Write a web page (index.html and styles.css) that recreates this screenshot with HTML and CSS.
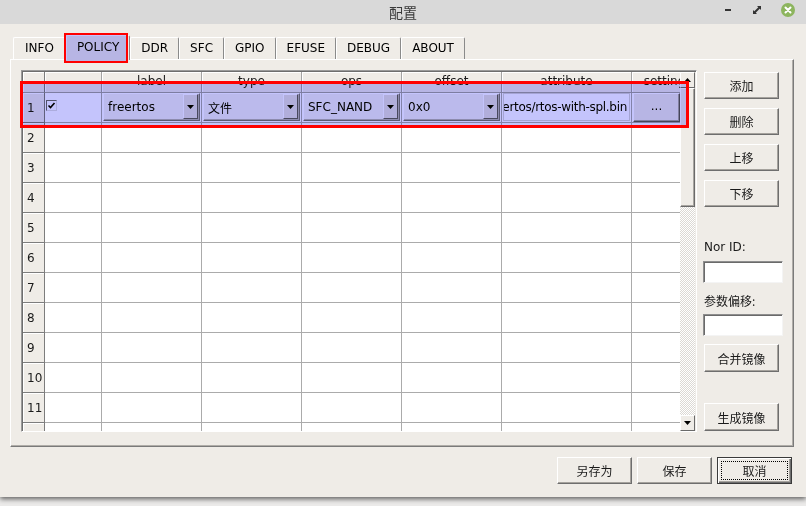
FILE: index.html
```html
<!DOCTYPE html>
<html>
<head>
<meta charset="utf-8">
<title>配置</title>
<link rel="stylesheet" href="styles.css">
</head>
<body>
<div class="window">
  <div class="titlebar">
    <div></div>
    <div class="title">配置</div>
    <div class="wm">
      <span class="wm-min"></span>
      <svg class="wm-max" width="8" height="8" viewBox="0 0 8 8"><polygon points="0,8 0,4 4,8" fill="#333"/><polygon points="8,0 8,4 4,0" fill="#333"/><line x1="1.5" y1="6.5" x2="6.5" y2="1.5" stroke="#333" stroke-width="2"/></svg>
      <svg class="wm-close" width="14" height="14" viewBox="0 0 14 14"><circle cx="7" cy="7" r="7" fill="#8db55e"/><path d="M4.5 4.5 L9.5 9.5 M9.5 4.5 L4.5 9.5" stroke="#fff" stroke-width="2" stroke-linecap="round"/></svg>
    </div>
  </div>
  <div class="main">
    <div class="tabs">
      <div class="tab">INFO</div>
      <div class="tab sel">POLICY</div>
      <div class="tab">DDR</div>
      <div class="tab">SFC</div>
      <div class="tab">GPIO</div>
      <div class="tab">EFUSE</div>
      <div class="tab">DEBUG</div>
      <div class="tab">ABOUT</div>
    </div>
    <div class="pane">
      <div class="table">
        <div class="viewport">
          <div class="grid">
            <div class="hh corner"></div>
            <div class="hh"></div>
            <div class="hh">label</div>
            <div class="hh">type</div>
            <div class="hh">ops</div>
            <div class="hh">offset</div>
            <div class="hh">attribute</div>
            <div class="hh">setting</div>

            <div class="vh">1</div>
            <div class="c cchk"><span class="chk"><svg width="9" height="9" viewBox="0 0 9 9"><path d="M1.5 4.5 L3.5 6.5 L7.5 2" fill="none" stroke="#000" stroke-width="1.6"/></svg></span></div>
            <div class="c ccombo"><div class="combo"><span class="combo-text">freertos</span><span class="combo-btn"><svg width="7" height="4" viewBox="0 0 7 4"><polygon points="0,0 7,0 3.5,4" fill="#000"/></svg></span></div></div>
            <div class="c ccombo"><div class="combo"><span class="combo-text cjk">文件</span><span class="combo-btn"><svg width="7" height="4" viewBox="0 0 7 4"><polygon points="0,0 7,0 3.5,4" fill="#000"/></svg></span></div></div>
            <div class="c ccombo"><div class="combo"><span class="combo-text">SFC_NAND</span><span class="combo-btn"><svg width="7" height="4" viewBox="0 0 7 4"><polygon points="0,0 7,0 3.5,4" fill="#000"/></svg></span></div></div>
            <div class="c ccombo"><div class="combo"><span class="combo-text">0x0</span><span class="combo-btn"><svg width="7" height="4" viewBox="0 0 7 4"><polygon points="0,0 7,0 3.5,4" fill="#000"/></svg></span></div></div>
            <div class="c ccombo"><div class="edit"><span>freertos/rtos-with-spl.bin</span></div></div>
            <div class="c ccombo"><div class="dots">...</div></div>

            <div class="vh">2</div><div class="c"></div><div class="c"></div><div class="c"></div><div class="c"></div><div class="c"></div><div class="c"></div><div class="c"></div>
            <div class="vh">3</div><div class="c"></div><div class="c"></div><div class="c"></div><div class="c"></div><div class="c"></div><div class="c"></div><div class="c"></div>
            <div class="vh">4</div><div class="c"></div><div class="c"></div><div class="c"></div><div class="c"></div><div class="c"></div><div class="c"></div><div class="c"></div>
            <div class="vh">5</div><div class="c"></div><div class="c"></div><div class="c"></div><div class="c"></div><div class="c"></div><div class="c"></div><div class="c"></div>
            <div class="vh">6</div><div class="c"></div><div class="c"></div><div class="c"></div><div class="c"></div><div class="c"></div><div class="c"></div><div class="c"></div>
            <div class="vh">7</div><div class="c"></div><div class="c"></div><div class="c"></div><div class="c"></div><div class="c"></div><div class="c"></div><div class="c"></div>
            <div class="vh">8</div><div class="c"></div><div class="c"></div><div class="c"></div><div class="c"></div><div class="c"></div><div class="c"></div><div class="c"></div>
            <div class="vh">9</div><div class="c"></div><div class="c"></div><div class="c"></div><div class="c"></div><div class="c"></div><div class="c"></div><div class="c"></div>
            <div class="vh">10</div><div class="c"></div><div class="c"></div><div class="c"></div><div class="c"></div><div class="c"></div><div class="c"></div><div class="c"></div>
            <div class="vh">11</div><div class="c"></div><div class="c"></div><div class="c"></div><div class="c"></div><div class="c"></div><div class="c"></div><div class="c"></div>
            <div class="vh">12</div><div class="c"></div><div class="c"></div><div class="c"></div><div class="c"></div><div class="c"></div><div class="c"></div><div class="c"></div>
          </div>
        </div>
        <div class="vscroll">
          <div class="sb-btn"><svg width="7" height="4" viewBox="0 0 7 4"><polygon points="0,4 7,4 3.5,0" fill="#000"/></svg></div>
          <div class="sb-thumb"></div>
          <div class="sb-track"></div>
          <div class="sb-btn"><svg width="7" height="4" viewBox="0 0 7 4"><polygon points="0,0 7,0 3.5,4" fill="#000"/></svg></div>
        </div>
      </div>
      <div class="side">
        <div class="btn side-btn first">添加</div>
        <div class="btn side-btn">删除</div>
        <div class="btn side-btn">上移</div>
        <div class="btn side-btn">下移</div>
        <div class="lbl lbl-nor">Nor ID:</div>
        <div class="field"></div>
        <div class="lbl lbl-off">参数偏移:</div>
        <div class="field"></div>
        <div class="btn side-btn merge">合并镜像</div>
        <div class="btn side-btn gen">生成镜像</div>
      </div>
    </div>
    <div class="footer">
      <div class="btn">另存为</div>
      <div class="btn">保存</div>
      <div class="btn default"><span class="focus">取消</span></div>
    </div>
  </div>
  <div class="tint tint-tab"></div>
  <div class="mark mark-tab"></div>
  <div class="tint tint-row"></div>
  <div class="mark mark-row"></div>
</div>
</body>
</html>
```
FILE: styles.css
```css
* { box-sizing: border-box; }
html, body { margin: 0; padding: 0; }
body {
  width: 806px;
  height: 506px;
  overflow: hidden;
  background: #ecebea;
  font-family: "DejaVu Sans", "Noto Sans CJK SC", sans-serif;
  font-size: 12px;
  color: #000;
}
.window {
  position: relative;
  width: 806px;
  height: 497px;
  background: #efece7;
  box-shadow: 0 2px 5px rgba(0,0,0,0.6);
  display: flex;
  flex-direction: column;
}
.titlebar {
  height: 24px;
  flex: none;
  background: #d9d9d9;
  display: grid;
  grid-template-columns: 1fr auto 1fr;
  align-items: center;
}
.title {
  font-family: "Noto Sans CJK SC", sans-serif;
  font-size: 14px;
  color: #3a3a3a;
}
.wm {
  display: flex;
  justify-content: flex-end;
  align-items: center;
  padding-right: 11px;
  height: 20px;
  margin-top: -4px;
}
.wm-min { width: 6px; height: 2px; background: #333; margin-right: 22px; }
.wm-max { margin-right: 20px; }
.main {
  flex: 1;
  display: flex;
  flex-direction: column;
  padding: 11px 12px 0 10px;
}
.tabs {
  height: 24px;
  display: flex;
  align-items: flex-end;
  padding-left: 3px;
}
.tab {
  height: 22px;
  padding: 0 10px 1px;
  display: flex;
  align-items: center;
  border-left: 1px solid #fff;
  border-top: 1px solid #fff;
  border-right: 1px solid #8a8a8a;
  border-top-left-radius: 2px;
  border-top-right-radius: 2px;
  white-space: nowrap;
}
.tab:first-child { padding: 0 11px 1px; }
.tab.sel {
  height: 25px;
  margin-bottom: -1px;
  position: relative;
  background: #efece7;
  padding-bottom: 3px;
}
.pane {
  height: 388px;
  border: 1px solid;
  border-color: #fff #7a7a7a #7a7a7a #fff;
  box-shadow: inset -1px -1px #b0ada8;
  padding: 10px 0 0 10px;
  display: flex;
  align-items: flex-start;
}
.table {
  width: 676px;
  height: 362px;
  border: 1px solid;
  border-color: #9a9a9a #fff #fff #9a9a9a;
  display: flex;
  padding: 1px 0 0 1px;
  box-shadow: inset 1px 1px #6e6e6e;
  background: #efece7;
}
.viewport {
  width: 657px;
  height: 359px;
  overflow: hidden;
  background: #fff;
}
.grid {
  display: grid;
  grid-template-columns: 22px 57px 100px 100px 100px 100px 130px 66px;
  grid-template-rows: 21px repeat(12, 30px);
  width: 675px;
}
.hh {
  background: #efece7;
  border-right: 1px solid #a3a3a3;
  border-bottom: 1px solid #a3a3a3;
  box-shadow: inset 1px 1px #fff;
  display: flex;
  align-items: center;
  justify-content: center;
  padding-bottom: 2px;
  white-space: nowrap;
  color: #1a1a1a;
}
.hh.corner { border-right-color: #7d7d7d; }
.vh {
  background: #efece7;
  border-right: 1px solid #7d7d7d;
  border-bottom: 1px solid #7d7d7d;
  box-shadow: inset 1px 1px #fff;
  display: flex;
  align-items: center;
  padding-left: 4px;
  color: #1a1a1a;
}
.c {
  background: #fff;
  border-right: 1px solid #ababab;
  border-bottom: 1px solid #ababab;
}
.cchk { padding: 7px 0 0 1px; }
.chk {
  display: flex;
  align-items: center;
  justify-content: center;
  width: 11px;
  height: 11px;
  background: #fff;
  border: 1px solid;
  border-color: #6a6a6a #e0e0e0 #e0e0e0 #6a6a6a;
}
.ccombo { padding: 0 1px 1px 1px; }
.combo {
  height: 28px;
  border: 1px solid;
  border-color: #fff #767676 #767676 #fff;
  box-shadow: inset -1px -1px #b8b5b0;
  background: #f3f2ef;
  display: flex;
  align-items: center;
  padding: 0 1px 0 4px;
}
.combo-text { flex: 1; white-space: nowrap; overflow: hidden; }
.cjk { font-family: "Noto Sans CJK SC", sans-serif; }
.combo-btn {
  width: 15px;
  height: 25px;
  margin-bottom: 1px;
  background: #e6e3de;
  border: 1px solid;
  border-color: #fff #5e5e5e #5e5e5e #fff;
  display: flex;
  align-items: center;
  justify-content: center;
}
.edit {
  height: 28px;
  border: 1px solid #d6d6d6;
  background: #fff;
  display: flex;
  align-items: center;
  justify-content: flex-end;
  overflow: hidden;
  padding-right: 2px;
  white-space: nowrap;
}
.edit span { flex: none; letter-spacing: -0.3px; }
.dots {
  width: 47px;
  height: 29px;
  background: #efece7;
  border: 1px solid;
  border-color: #fff #5a5a5a #5a5a5a #fff;
  box-shadow: inset -1px -1px #a8a5a0;
  display: flex;
  align-items: center;
  justify-content: center;
  padding-bottom: 4px;
}
.vscroll {
  width: 15px;
  height: 359px;
  display: flex;
  flex-direction: column;
}
.sb-btn {
  height: 16px;
  flex: none;
  background: #efece7;
  border: 1px solid;
  border-color: #fff #6a6a6a #6a6a6a #fff;
  display: flex;
  align-items: center;
  justify-content: center;
}
.sb-thumb {
  height: 119px;
  flex: none;
  background: #efece7;
  border: 1px solid;
  border-color: #fff #6a6a6a #6a6a6a #fff;
  box-shadow: inset -1px -1px #a8a5a0;
}
.sb-track {
  flex: 1;
  background: repeating-conic-gradient(#ffffff 0 25%, #dcd9d4 0 50%) 0 0 / 2px 2px;
}
.side {
  margin-left: 6px;
  width: 80px;
  display: flex;
  flex-direction: column;
  align-items: flex-start;
}
.btn {
  width: 75px;
  height: 27px;
  background: #efece7;
  border: 1px solid;
  border-color: #fff #6e6e6e #6e6e6e #fff;
  box-shadow: inset -1px -1px #a5a29d;
  display: flex;
  align-items: center;
  justify-content: center;
  font-family: "Noto Sans CJK SC", sans-serif;
  font-size: 12px;
  color: #1a1a1a;
}
.side-btn { margin-left: 1px; margin-top: 9px; }
.side-btn.first { margin-top: 2px; }
.lbl { height: 16px; display: flex; align-items: center; color: #1a1a1a; margin-left: 1px; }
.lbl-nor { margin-top: 32px; }
.lbl-off { margin-top: 9px; font-family: "Noto Sans CJK SC", sans-serif; }
.field {
  margin-top: 6px;
  width: 80px;
  height: 22px;
  background: #fff;
  border: 1px solid;
  border-color: #8e8e8e #f4f4f4 #f4f4f4 #8e8e8e;
  box-shadow: inset 1px 1px #6a6a6a;
}
.merge { margin-top: 8px; height: 28px; }
.gen { margin-top: 31px; height: 28px; }
.footer {
  margin-top: 10px;
  display: flex;
  justify-content: flex-end;
  gap: 5px;
  padding-right: 2px;
}
.btn.default {
  border: 1px solid #3a3a3a;
  box-shadow: inset 1px 1px #fff, inset -1px -1px #6e6e6e, inset -2px -2px #a5a29d;
  padding: 3px;
}
.focus {
  width: 100%;
  height: 100%;
  border: 1px dotted #000;
  display: flex;
  align-items: center;
  justify-content: center;
}
.tint {
  position: absolute;
  background: #c4c4fc;
  mix-blend-mode: multiply;
  pointer-events: none;
}
.mark {
  position: absolute;
  border: 2px solid #ff0000;
  pointer-events: none;
}
.tint-tab, .mark-tab { left: 64px; top: 33px; width: 64px; height: 30px; }
.tint-row, .mark-row { left: 20px; top: 81px; width: 669px; height: 47px; }
.mark-row { border-width: 3px; }
```
